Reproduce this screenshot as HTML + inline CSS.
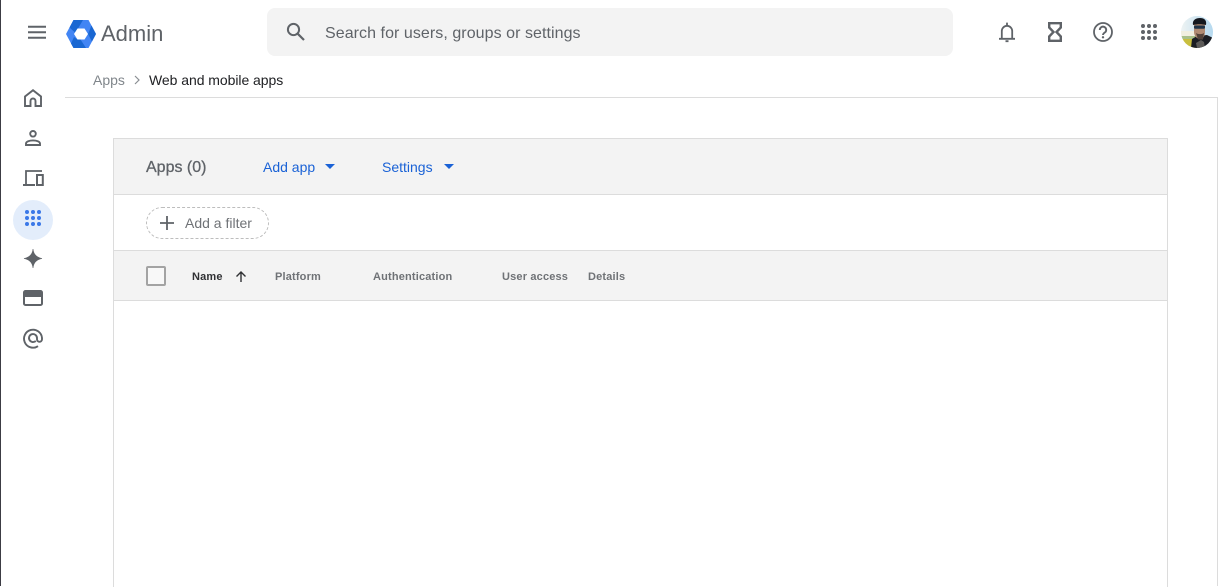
<!DOCTYPE html>
<html><head><meta charset="utf-8">
<style>
html,body{margin:0;padding:0;background:#fff}
body{width:1218px;height:586px;position:relative;overflow:hidden;font-family:"Liberation Sans",Arial,sans-serif}
.a{position:absolute;white-space:nowrap}
svg{position:absolute;overflow:visible}
.th{top:270px;font-size:11px;line-height:14px;font-weight:700;color:#6f7276;letter-spacing:.17px}
</style></head><body>
<div class="a" style="left:0;top:0;width:1px;height:586px;background:#3c3c44"></div>

<!-- menu -->
<svg style="left:28px;top:25px" width="18" height="14"><path d="M0 1.800h18M0 7.300h18M0 12.700h18" stroke="#5f6368" stroke-width="2" fill="none"/></svg>
<!-- logo -->
<svg style="left:66px;top:20px" width="30" height="28" viewBox="0 0 30 28">
<path d="M7.500 0h15L30 14l-7.500 14h-15L0 14z" fill="#4285f4"/>
<path d="M7.500 0H17l-5 8.500L9 12.500 3.500 7.500z" fill="#1967d2"/>
<path d="M25.500 5.500L30 14l-4 7.500L22 14z" fill="#1967d2"/>
<path d="M7.500 28H20l-5.500-8.500H11.500L8 17 5 23.500z" fill="#1967d2"/>
<path d="M8 14l3.500-5.500h7L22 14l-3.500 5.500h-7z" fill="#fff"/>
</svg>
<div class="a" style="left:101px;top:20px;font-size:22px;line-height:27px;color:#5f6368">Admin</div>

<!-- search -->
<div class="a" style="left:267px;top:8px;width:686px;height:48px;background:#f3f3f3;border-radius:8px"></div>
<svg style="left:285px;top:21px" width="22" height="22" viewBox="0 0 22 22"><circle cx="8.500" cy="8.500" r="5.600" fill="none" stroke="#5f6368" stroke-width="2"/><path d="M12.800 12.800L19 19" stroke="#5f6368" stroke-width="2.200"/></svg>
<div class="a" style="left:325px;top:24px;font-size:16px;line-height:19px;color:#5f6368;letter-spacing:.06px">Search for users, groups or settings</div>

<!-- top right icons -->
<svg style="left:999px;top:22px" width="16" height="20" viewBox="0 0 16 20"><path d="M0 16.800h16M2.800 16.800V9a5.200 5.200 0 0 1 10.400 0v7.800M6.500 19.200h3M8 .6v3" stroke="#5f6368" stroke-width="1.800" fill="none"/></svg>
<svg style="left:1048px;top:22px" width="14" height="20" viewBox="0 0 14 20"><path d="M1.200 1.200h11.600v4.300L8.500 10l4.300 4.500v4.300H1.200v-4.300L5.500 10 1.200 5.500z" fill="none" stroke="#5f6368" stroke-width="2.400"/></svg>
<svg style="left:1093px;top:22px" width="20" height="20" viewBox="0 0 20 20"><circle cx="10" cy="10" r="9" fill="none" stroke="#5f6368" stroke-width="1.800"/><path d="M6.800 8a3.200 3.200 0 1 1 5 2.500c-1.200.8-1.800 1.200-1.800 2.500" fill="none" stroke="#5f6368" stroke-width="1.900"/><circle cx="10" cy="15.300" r="1.200" fill="#5f6368"/></svg>
<svg style="left:1141px;top:24px" width="16" height="16" viewBox="0 0 16 16" fill="#5f6368"><circle cx="2" cy="2" r="2"/><circle cx="8" cy="2" r="2"/><circle cx="14" cy="2" r="2"/><circle cx="2" cy="8" r="2"/><circle cx="8" cy="8" r="2"/><circle cx="14" cy="8" r="2"/><circle cx="2" cy="14" r="2"/><circle cx="8" cy="14" r="2"/><circle cx="14" cy="14" r="2"/></svg>
<!-- avatar -->
<svg style="left:1181px;top:16px" width="32" height="32" viewBox="0 0 32 32">
<defs><clipPath id="c"><circle cx="16" cy="16" r="16"/></clipPath>
<linearGradient id="s" x1="0" x2="1" y1="0" y2="0"><stop offset="0" stop-color="#eef3f3"/><stop offset="1" stop-color="#b5d9ef"/></linearGradient></defs>
<g clip-path="url(#c)">
<rect width="32" height="32" fill="url(#s)"/>
<rect y="15" width="15" height="6" fill="#f1efe0"/>
<rect y="20" width="15" height="3" fill="#a9c08a"/>
<rect y="23" width="15" height="9" fill="#c9bf3f"/>
<path d="M10 32l1-9 5-3 10-1 6 3v10z" fill="#1b1d23"/>
<path d="M15 27l5-3 3 2 1 6h-8z" fill="#5c5a58"/>
<path d="M13 8h11v8c0 4-2 7-5 7-3 0-6-3-6-7z" fill="#b08a72"/>
<path d="M12 9c-1-5 3-7 7-7s7 2 6 7c-4-1-9-1-13 0z" fill="#14171e"/>
<rect x="13" y="9.500" width="11" height="3.200" rx="1.300" fill="#1d3247"/>
<path d="M15 17c2 1.500 6 1.500 8 0l-1 6.500h-5z" fill="#53423a"/>
</g></svg>

<!-- breadcrumb -->
<div class="a" style="left:93px;top:72px;font-size:14px;line-height:17px;color:#80868b">Apps</div>
<svg style="left:134px;top:75px" width="6" height="10" viewBox="0 0 6 10"><path d="M1 1l4 4-4 4" fill="none" stroke="#8a8e93" stroke-width="1.200"/></svg>
<div class="a" style="left:149px;top:72px;font-size:14px;line-height:17px;color:#202124;letter-spacing:-.05px">Web and mobile apps</div>
<div class="a" style="left:65px;top:97px;width:1153px;height:1px;background:#dcdcdc"></div>
<div class="a" style="left:1217px;top:97px;width:1px;height:489px;background:#dcdcdc"></div>

<!-- side nav -->
<svg style="left:24px;top:89px" width="18" height="18" viewBox="0 0 18 18"><path d="M1 7.500L9 1.200l8 6.300V17h-5.500v-5a2.500 2.500 0 0 0-5 0v5H1z" fill="none" stroke="#5f6368" stroke-width="1.900"/></svg>
<svg style="left:25px;top:130px" width="16" height="16" viewBox="0 0 16 16"><circle cx="8" cy="3.800" r="2.800" fill="none" stroke="#5f6368" stroke-width="1.900"/><path d="M1 15v-1.500c0-2 3.500-3.100 7-3.100s7 1.100 7 3.100V15z" fill="none" stroke="#5f6368" stroke-width="1.900"/></svg>
<svg style="left:23px;top:170px" width="21" height="16" viewBox="0 0 21 16"><path d="M19 1H3v13" fill="none" stroke="#5f6368" stroke-width="1.800"/><path d="M0 15h12" stroke="#5f6368" stroke-width="2"/><rect x="14" y="5" width="5.800" height="10" fill="none" stroke="#5f6368" stroke-width="2"/></svg>
<div class="a" style="left:13px;top:200px;width:40px;height:40px;border-radius:50%;background:#e3edfb"></div>
<svg style="left:25px;top:210px" width="16" height="16" viewBox="0 0 16 16" fill="#3a78e8"><circle cx="2" cy="2" r="2"/><circle cx="8" cy="2" r="2"/><circle cx="14" cy="2" r="2"/><circle cx="2" cy="8" r="2"/><circle cx="8" cy="8" r="2"/><circle cx="14" cy="8" r="2"/><circle cx="2" cy="14" r="2"/><circle cx="8" cy="14" r="2"/><circle cx="14" cy="14" r="2"/></svg>
<svg style="left:24px;top:249px" width="18" height="19" viewBox="0 0 18 19"><path d="M9 0C9.500 5 12.500 8.500 18 9.500 12.500 10.500 9.500 14 9 19 8.500 14 5.500 10.500 0 9.500 5.500 8.500 8.500 5 9 0z" fill="#5f6368" stroke="#5f6368" stroke-width=".6"/></svg>
<svg style="left:23px;top:290px" width="20" height="16" viewBox="0 0 20 16"><rect x="1" y="1" width="18" height="14" rx="1.500" fill="none" stroke="#5f6368" stroke-width="2"/><rect x="1" y="1" width="18" height="6" fill="#5f6368"/></svg>
<svg style="left:23px;top:328px" width="20" height="20" viewBox="0 0 20 20"><path d="M15 18.200A9 9 0 1 1 19 10v1.300a2.500 2.500 0 0 1-5 0V10a4 4 0 1 0-1.200 2.900" fill="none" stroke="#5f6368" stroke-width="1.900"/></svg>

<!-- card -->
<div class="a" style="left:113px;top:138px;width:1053px;height:448px;border:1px solid #dcdcdc;border-bottom:0"></div>
<div class="a" style="left:114px;top:139px;width:1053px;height:55px;background:#f3f3f3;border-bottom:1px solid #dcdcdc"></div>
<div class="a" style="left:146px;top:158px;font-size:16px;line-height:19px;font-weight:400;color:#5f6368;-webkit-text-stroke:.3px #5f6368">Apps (0)</div>
<div class="a" style="left:263px;top:159px;font-size:14px;line-height:17px;color:#1a62d6">Add app</div>
<svg style="left:325px;top:164px" width="10" height="5"><path d="M0 0h10L5 5z" fill="#1a62d6"/></svg>
<div class="a" style="left:382px;top:159px;font-size:14px;line-height:17px;color:#1a62d6">Settings</div>
<svg style="left:444px;top:164px" width="10" height="5"><path d="M0 0h10L5 5z" fill="#1a62d6"/></svg>

<!-- filter -->
<div class="a" style="left:146px;top:207px;width:121px;height:30px;border:1px dashed #bdbdbd;border-radius:16px"></div>
<svg style="left:160px;top:216px" width="14" height="14"><path d="M7 0v14M0 7h14" stroke="#5f6368" stroke-width="1.800"/></svg>
<div class="a" style="left:185px;top:215px;font-size:14px;line-height:17px;color:#6f7276">Add a filter</div>

<!-- table header -->
<div class="a" style="left:114px;top:250px;width:1053px;height:49px;background:#f3f3f3;border-top:1px solid #dcdcdc;border-bottom:1px solid #dcdcdc"></div>
<div class="a" style="left:146px;top:266px;width:16px;height:16px;border:2px solid #a3a3a3;border-radius:2px;background:#f8f8f8"></div>
<div class="a th" style="left:192px;color:#303134">Name</div>
<svg style="left:235px;top:271px" width="12" height="11" viewBox="0 0 12 11"><path d="M6 11V1M1.500 5.500L6 1l4.500 4.500" fill="none" stroke="#303134" stroke-width="1.400"/></svg>
<div class="a th" style="left:275px">Platform</div>
<div class="a th" style="left:373px">Authentication</div>
<div class="a th" style="left:502px">User access</div>
<div class="a th" style="left:588px">Details</div>
</body></html>
